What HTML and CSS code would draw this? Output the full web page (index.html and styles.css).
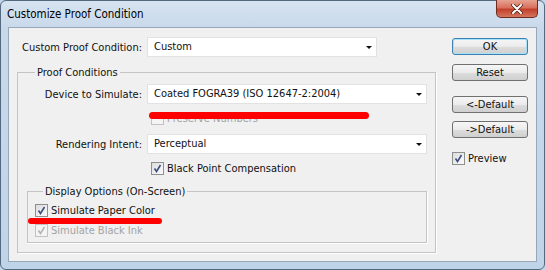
FILE: index.html
```html
<!DOCTYPE html>
<html lang="en">

<head>
    <meta charset="UTF-8">
    <title>Customize Proof Condition</title>
    <link rel="stylesheet" href="styles.css">
</head>

<body>
    <div class="window">
        <div class="titlebar">
            <span class="title">Customize Proof Condition</span>
            <span class="close">
                <svg width="12" height="10" viewBox="0 0 12 10">
                    <path d="M2 1 L10 9 M10 1 L2 9" stroke="#5a2419" stroke-width="3.6" stroke-linecap="round" />
                    <path d="M2 1 L10 9 M10 1 L2 9" stroke="#fff" stroke-width="2" stroke-linecap="round" />
                </svg>
            </span>
        </div>

        <div class="client">
            <div class="form">
                <div class="row">
                    <label class="lbl lbl-outer">Custom Proof Condition:</label>
                    <div class="select select-short">Custom<span class="arrow"></span></div>
                </div>

                <fieldset class="proof">
                    <legend>Proof Conditions</legend>
                    <div class="row row-device">
                        <label class="lbl">Device to Simulate:</label>
                        <div class="select">Coated FOGRA39 (ISO 12647-2:2004)<span class="arrow"></span></div>
                    </div>

                    <div class="check check-preserve disabled"><span class="box"></span>Preserve Numbers</div>

                    <div class="row row-intent">
                        <label class="lbl">Rendering Intent:</label>
                        <div class="select">Perceptual<span class="arrow"></span></div>
                    </div>

                    <div class="check check-bpc">
                        <span class="box"><svg width="9" height="9" viewBox="0 0 9 9"><path d="M1.5 4.5 L3.5 7.5 L7.5 1" /></svg></span>Black Point Compensation
                    </div>

                    <fieldset class="display">
                        <legend>Display Options (On-Screen)</legend>
                        <div class="check check-paper">
                            <span class="box"><svg width="9" height="9" viewBox="0 0 9 9"><path d="M1.5 4.5 L3.5 7.5 L7.5 1" /></svg></span>Simulate Paper Color
                        </div>
                        <div class="check check-ink disabled">
                            <span class="box"><svg width="9" height="9" viewBox="0 0 9 9"><path d="M1.5 4.5 L3.5 7.5 L7.5 1" /></svg></span>Simulate Black Ink
                        </div>
                    </fieldset>
                </fieldset>
            </div>

            <div class="buttons">
                <button class="btn btn-ok">OK</button>
                <button class="btn btn-reset">Reset</button>
                <button class="btn btn-prev">&lt;-Default</button>
                <button class="btn btn-next">-&gt;Default</button>
                <div class="check check-preview">
                    <span class="box"><svg width="9" height="9" viewBox="0 0 9 9"><path d="M1.5 4.5 L3.5 7.5 L7.5 1" /></svg></span>Preview
                </div>
            </div>

            <!-- red marker strokes drawn over the dialog -->
            <span class="marker marker-device"></span>
            <span class="marker marker-paper"></span>
        </div>
    </div>
</body>

</html>
```

FILE: styles.css
```css
body {
    margin: 0;
    background-color: #c3d6ea;
}

.window {
    box-sizing: border-box;
    width: 545px;
    height: 270px;
    border: 1px solid #55697e;
    border-radius: 6px;
    background: linear-gradient(to bottom, #d6e3f0, #c8d9eb 28px, #c0d4e8);
    font-family: "DejaVu Sans Condensed", "DejaVu Sans", sans-serif;
    font-size: 11px;
    color: #111;
}

.titlebar {
    display: flex;
    justify-content: space-between;
    align-items: flex-start;
    height: 26px;
    padding: 0 6px;
}

.title {
    font-size: 11.5px;
    line-height: 16px;
    padding-top: 5px;
    color: #000;
}

.close {
    box-sizing: border-box;
    display: flex;
    align-items: center;
    justify-content: center;
    width: 42px;
    height: 18px;
    margin-top: -1px;
    border: 1px solid #6e2b1f;
    border-top: none;
    border-radius: 0 0 5px 5px;
    background: linear-gradient(to bottom, #e6a392 0%, #d8705d 45%, #c2402b 55%, #d4765f 100%);
}

.client {
    position: relative;
    box-sizing: border-box;
    display: flex;
    height: 235px;
    margin: 0 7px;
    border: 1px solid #98a7b7;
    background-color: #f0f0f0;
}

.form {
    padding-top: 9px;
}

.row {
    display: flex;
    align-items: center;
    height: 20px;
}

.lbl {
    width: 124px;
    margin-right: 5px;
    text-align: right;
    white-space: nowrap;
}

.lbl-outer {
    width: 133px;
}

.select {
    position: relative;
    box-sizing: border-box;
    width: 280px;
    height: 20px;
    line-height: 18px;
    padding-left: 6px;
    border: 1px solid #e2e2e2;
    background-color: #fff;
    white-space: nowrap;
}

.select-short {
    width: 230px;
}

.arrow {
    position: absolute;
    right: 4px;
    top: 8px;
    border-left: 3px solid transparent;
    border-right: 3px solid transparent;
    border-top: 3px solid #111;
}

fieldset {
    box-sizing: border-box;
    margin: 0;
    padding: 0;
    border: 1px solid #c4c4c4;
    box-shadow: 1px 1px 0 #fff;
}

legend {
    padding: 0 2px;
    line-height: 15px;
}

.proof {
    width: 419px;
    margin: 8px 0 0 8px;
}

.proof > legend {
    margin-left: 17px;
}

.row-device {
    margin-top: 4px;
}

.row-intent {
    margin-top: 9px;
}

.check {
    display: flex;
    align-items: center;
    gap: 3px;
    height: 13px;
    line-height: 13px;
    white-space: nowrap;
}

.box {
    box-sizing: border-box;
    display: flex;
    align-items: center;
    justify-content: center;
    width: 13px;
    height: 13px;
    border: 1px solid #8e8f8f;
    background: linear-gradient(135deg, #dcdcdc, #fbfbfb);
}

.box svg path {
    fill: none;
    stroke: #3b4f83;
    stroke-width: 1.6;
}

.disabled {
    color: #a3a3a3;
}

.disabled .box {
    border-color: #c2c2c2;
    background: #f4f4f4;
}

.disabled .box svg path {
    stroke: #b4b4b4;
}

.check-preserve {
    margin: 8px 0 0 133px;
}

.check-bpc {
    margin: 8px 0 0 133px;
}

.display {
    width: 400px;
    margin: 9px 0 9px 9px;
    padding: 0 0 5px 7px;
}

.display > legend {
    margin-left: 8px;
}

.check-paper {
    margin-top: 5px;
}

.check-ink {
    margin-top: 7px;
}

.buttons {
    display: flex;
    flex-direction: column;
    width: 76px;
    margin: 0 8px 0 auto;
    padding-top: 10px;
}

.btn {
    box-sizing: border-box;
    height: 17px;
    padding: 0;
    border: 1px solid #707070;
    border-radius: 3px;
    background: linear-gradient(to bottom, #f6f6f6, #ebebeb 50%, #dddddd 51%, #cfcfcf);
    font-family: inherit;
    font-size: 11px;
    line-height: 15px;
    color: #111;
}

.btn-ok {
    border-color: #3c7fb1;
    box-shadow: inset 0 0 0 1px #a6e2f8;
}

.btn-reset {
    margin-top: 9px;
}

.btn-prev {
    margin-top: 15px;
}

.btn-next {
    margin-top: 8px;
}

.check-preview {
    margin-top: 14px;
}

.marker {
    position: absolute;
    background-color: #ff0000;
    border-radius: 4px;
}

.marker-device {
    left: 140px;
    top: 84px;
    width: 220px;
    height: 7px;
}

.marker-paper {
    left: 19px;
    top: 190px;
    width: 134px;
    height: 6px;
}
```
